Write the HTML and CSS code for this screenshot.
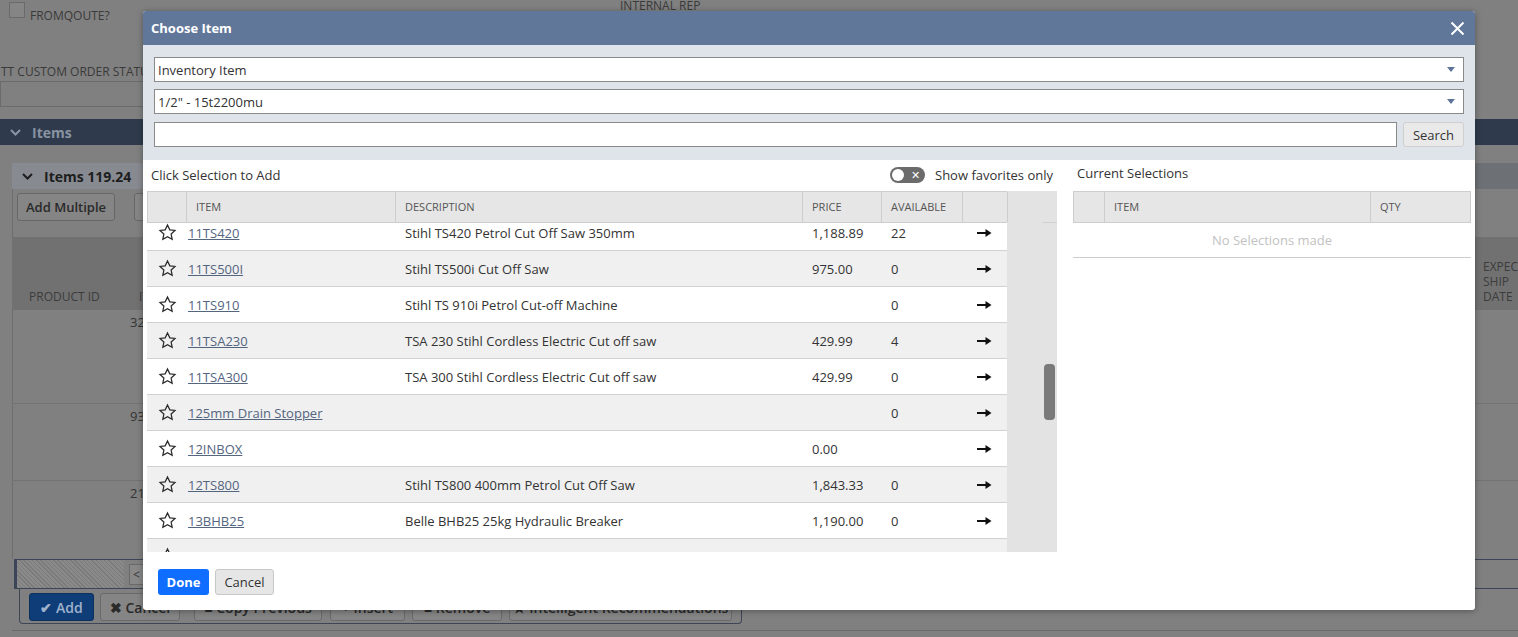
FILE: index.html
```html
<!DOCTYPE html>
<html>
<head>
<meta charset="utf-8">
<title>Choose Item</title>
<link rel="stylesheet" href="styles.css">
</head>
<body>
<div class="page">
  <div class="top-row">
    <div class="chk-wrap"><span class="chk"></span><span class="chk-label">FROMQOUTE?</span></div>
    <span class="rep-label">INTERNAL REP</span>
  </div>
  <div class="status-label">TT CUSTOM ORDER STATUS</div>
  <div class="status-input"></div>
  <div class="items-bar">
    <svg class="chev" width="11" height="7" viewBox="0 0 11 7"><path d="M1 1l4.5 4.5L10 1" fill="none" stroke="#8a94a3" stroke-width="2"/></svg>
    <span>Items</span>
  </div>
  <div class="subpanel">
    <div class="subtabs">
      <div class="subtab">
        <svg class="chev" width="11" height="7" viewBox="0 0 11 7"><path d="M1 1l4.5 4.5L10 1" fill="none" stroke="#1e1e1e" stroke-width="2"/></svg>
        <span>Items 119.24</span>
      </div>
    </div>
    <div class="sub-toolbar">
      <button class="bg-btn">Add Multiple</button>
      <button class="bg-btn">Clear</button>
    </div>
    <div class="lines-head">
      <span>PRODUCT ID</span>
      <span>ITEM</span>
      <span>EXPECTED<br>SHIP<br>DATE</span>
    </div>
    <div class="line r1"><span></span><span class="num">32</span><span></span></div>
    <div class="line r2"><span></span><span class="num">93</span><span></span></div>
    <div class="line r3"><span></span><span class="num">21</span><span></span></div>
    <div class="pager-bar">
      <div class="hatch"></div>
      <div class="pager-btn">&lt;</div>
    </div>
    <div class="btn-panel">
      <button class="pb pb-add w-add">&#10004; Add</button>
      <button class="pb w-cancel">&#10006; Cancel</button>
      <button class="pb w-copy">&#9632; Copy Previous</button>
      <button class="pb w-insert">+ Insert</button>
      <button class="pb w-remove">&#9632; Remove</button>
      <button class="pb w-intel">&#9733; Intelligent Recommendations</button>
    </div>
  </div>
  <div class="bottom-line"></div>
</div>

<div class="modal">
  <div class="m-head">
    <span>Choose Item</span>
    <svg width="15" height="15" viewBox="0 0 15 15"><path d="M1.5 1.5l12 12M13.5 1.5l-12 12" stroke="#fff" stroke-width="2"/></svg>
  </div>
  <div class="m-filters">
    <div class="select"><span>Inventory Item</span><span class="caret"></span></div>
    <div class="select"><span>1/2" - 15t2200mu</span><span class="caret"></span></div>
    <div class="search-row">
      <div class="search-input"></div>
      <button class="search-btn">Search</button>
    </div>
  </div>
  <div class="m-content">
    <div class="left">
      <div class="left-title">
        <span>Click Selection to Add</span>
        <div class="fav">
          <span class="toggle"><span class="knob"></span><span class="tx">&#10005;</span></span>
          <span>Show favorites only</span>
        </div>
      </div>
      <div class="grid-wrap">
        <div class="tbl">
          <div class="thead">
            <div class="th"></div>
            <div class="th">Item</div>
            <div class="th">Description</div>
            <div class="th">Price</div>
            <div class="th">Available</div>
            <div class="th"></div>
          </div>
          <div class="tbody">
            <div class="rows">
              <div class="row">
                <div class="c-star"><svg class="star" width="19" height="19" viewBox="0 0 24 24"><path d="M12 2.5l2.9 6.1 6.6.8-4.9 4.6 1.3 6.6L12 17.3l-5.9 3.3 1.3-6.6-4.9-4.6 6.6-.8z"/></svg></div>
                <div class="c-item"><a>11TS420</a></div>
                <div class="c-txt">Stihl TS420 Petrol Cut Off Saw 350mm</div>
                <div class="c-txt">1,188.89</div>
                <div class="c-txt">22</div>
                <div class="c-arr"><svg width="15" height="10" viewBox="0 0 15 10"><path d="M0 5h10" stroke="#111" stroke-width="2"/><path d="M8.5 1l6 4-6 4z" fill="#111"/></svg></div>
              </div>
              <div class="row">
                <div class="c-star"><svg class="star" width="19" height="19" viewBox="0 0 24 24"><path d="M12 2.5l2.9 6.1 6.6.8-4.9 4.6 1.3 6.6L12 17.3l-5.9 3.3 1.3-6.6-4.9-4.6 6.6-.8z"/></svg></div>
                <div class="c-item"><a>11TS500I</a></div>
                <div class="c-txt">Stihl TS500i Cut Off Saw</div>
                <div class="c-txt">975.00</div>
                <div class="c-txt">0</div>
                <div class="c-arr"><svg width="15" height="10" viewBox="0 0 15 10"><path d="M0 5h10" stroke="#111" stroke-width="2"/><path d="M8.5 1l6 4-6 4z" fill="#111"/></svg></div>
              </div>
              <div class="row">
                <div class="c-star"><svg class="star" width="19" height="19" viewBox="0 0 24 24"><path d="M12 2.5l2.9 6.1 6.6.8-4.9 4.6 1.3 6.6L12 17.3l-5.9 3.3 1.3-6.6-4.9-4.6 6.6-.8z"/></svg></div>
                <div class="c-item"><a>11TS910</a></div>
                <div class="c-txt">Stihl TS 910i Petrol Cut-off Machine</div>
                <div class="c-txt"></div>
                <div class="c-txt">0</div>
                <div class="c-arr"><svg width="15" height="10" viewBox="0 0 15 10"><path d="M0 5h10" stroke="#111" stroke-width="2"/><path d="M8.5 1l6 4-6 4z" fill="#111"/></svg></div>
              </div>
              <div class="row">
                <div class="c-star"><svg class="star" width="19" height="19" viewBox="0 0 24 24"><path d="M12 2.5l2.9 6.1 6.6.8-4.9 4.6 1.3 6.6L12 17.3l-5.9 3.3 1.3-6.6-4.9-4.6 6.6-.8z"/></svg></div>
                <div class="c-item"><a>11TSA230</a></div>
                <div class="c-txt">TSA 230 Stihl Cordless Electric Cut off saw</div>
                <div class="c-txt">429.99</div>
                <div class="c-txt">4</div>
                <div class="c-arr"><svg width="15" height="10" viewBox="0 0 15 10"><path d="M0 5h10" stroke="#111" stroke-width="2"/><path d="M8.5 1l6 4-6 4z" fill="#111"/></svg></div>
              </div>
              <div class="row">
                <div class="c-star"><svg class="star" width="19" height="19" viewBox="0 0 24 24"><path d="M12 2.5l2.9 6.1 6.6.8-4.9 4.6 1.3 6.6L12 17.3l-5.9 3.3 1.3-6.6-4.9-4.6 6.6-.8z"/></svg></div>
                <div class="c-item"><a>11TSA300</a></div>
                <div class="c-txt">TSA 300 Stihl Cordless Electric Cut off saw</div>
                <div class="c-txt">429.99</div>
                <div class="c-txt">0</div>
                <div class="c-arr"><svg width="15" height="10" viewBox="0 0 15 10"><path d="M0 5h10" stroke="#111" stroke-width="2"/><path d="M8.5 1l6 4-6 4z" fill="#111"/></svg></div>
              </div>
              <div class="row">
                <div class="c-star"><svg class="star" width="19" height="19" viewBox="0 0 24 24"><path d="M12 2.5l2.9 6.1 6.6.8-4.9 4.6 1.3 6.6L12 17.3l-5.9 3.3 1.3-6.6-4.9-4.6 6.6-.8z"/></svg></div>
                <div class="c-item"><a>125mm Drain Stopper</a></div>
                <div class="c-txt"></div>
                <div class="c-txt"></div>
                <div class="c-txt">0</div>
                <div class="c-arr"><svg width="15" height="10" viewBox="0 0 15 10"><path d="M0 5h10" stroke="#111" stroke-width="2"/><path d="M8.5 1l6 4-6 4z" fill="#111"/></svg></div>
              </div>
              <div class="row">
                <div class="c-star"><svg class="star" width="19" height="19" viewBox="0 0 24 24"><path d="M12 2.5l2.9 6.1 6.6.8-4.9 4.6 1.3 6.6L12 17.3l-5.9 3.3 1.3-6.6-4.9-4.6 6.6-.8z"/></svg></div>
                <div class="c-item"><a>12INBOX</a></div>
                <div class="c-txt"></div>
                <div class="c-txt">0.00</div>
                <div class="c-txt"></div>
                <div class="c-arr"><svg width="15" height="10" viewBox="0 0 15 10"><path d="M0 5h10" stroke="#111" stroke-width="2"/><path d="M8.5 1l6 4-6 4z" fill="#111"/></svg></div>
              </div>
              <div class="row">
                <div class="c-star"><svg class="star" width="19" height="19" viewBox="0 0 24 24"><path d="M12 2.5l2.9 6.1 6.6.8-4.9 4.6 1.3 6.6L12 17.3l-5.9 3.3 1.3-6.6-4.9-4.6 6.6-.8z"/></svg></div>
                <div class="c-item"><a>12TS800</a></div>
                <div class="c-txt">Stihl TS800 400mm Petrol Cut Off Saw</div>
                <div class="c-txt">1,843.33</div>
                <div class="c-txt">0</div>
                <div class="c-arr"><svg width="15" height="10" viewBox="0 0 15 10"><path d="M0 5h10" stroke="#111" stroke-width="2"/><path d="M8.5 1l6 4-6 4z" fill="#111"/></svg></div>
              </div>
              <div class="row">
                <div class="c-star"><svg class="star" width="19" height="19" viewBox="0 0 24 24"><path d="M12 2.5l2.9 6.1 6.6.8-4.9 4.6 1.3 6.6L12 17.3l-5.9 3.3 1.3-6.6-4.9-4.6 6.6-.8z"/></svg></div>
                <div class="c-item"><a>13BHB25</a></div>
                <div class="c-txt">Belle BHB25 25kg Hydraulic Breaker</div>
                <div class="c-txt">1,190.00</div>
                <div class="c-txt">0</div>
                <div class="c-arr"><svg width="15" height="10" viewBox="0 0 15 10"><path d="M0 5h10" stroke="#111" stroke-width="2"/><path d="M8.5 1l6 4-6 4z" fill="#111"/></svg></div>
              </div>
              <div class="row">
                <div class="c-star"><svg class="star" width="19" height="19" viewBox="0 0 24 24"><path d="M12 2.5l2.9 6.1 6.6.8-4.9 4.6 1.3 6.6L12 17.3l-5.9 3.3 1.3-6.6-4.9-4.6 6.6-.8z"/></svg></div>
                <div class="c-item"><a>13BHB35</a></div>
                <div class="c-txt">Belle BHB35 35kg Hydraulic Breaker with Chisel and Point</div>
                <div class="c-txt">1,450.00</div>
                <div class="c-txt">0</div>
                <div class="c-arr"><svg width="15" height="10" viewBox="0 0 15 10"><path d="M0 5h10" stroke="#111" stroke-width="2"/><path d="M8.5 1l6 4-6 4z" fill="#111"/></svg></div>
              </div>
            </div>
          </div>
        </div>
        <div class="scroll-gap"></div>
        <div class="scrollbar">
          <div class="sb-top"></div>
          <div class="sb-thumb"></div>
        </div>
      </div>
    </div>
    <div class="right">
      <div class="right-title">Current Selections</div>
      <div class="sel-head">
        <div class="th"></div>
        <div class="th">Item</div>
        <div class="th">Qty</div>
      </div>
      <div class="empty">No Selections made</div>
    </div>
  </div>
  <div class="m-foot">
    <button class="btn-done">Done</button>
    <button class="btn-cancel">Cancel</button>
  </div>
</div>
</body>
</html>
```

FILE: styles.css
```css
* { box-sizing: border-box; }
html, body { margin: 0; padding: 0; }
body {
  width: 1518px;
  height: 637px;
  overflow: hidden;
  background: #808080;
  font-family: "Open Sans", "Liberation Sans", sans-serif;
  font-size: 13px;
  color: #333;
  position: relative;
}

/* ---------- dimmed background page ---------- */
.page { color: #353535; }
.top-row {
  height: 22px;
  display: grid;
  grid-template-columns: 611px auto;
  padding-left: 9px;
}
.chk-wrap { display: flex; align-items: flex-start; padding-top: 2px; }
.chk { width: 16px; height: 16px; border: 1px solid #6a6a6a; background: #858585; display: block; }
.chk-label { margin-left: 5px; margin-top: 6px; font-size: 12px; line-height: 16px; color: #3a3a3a; }
.rep-label { font-size: 12px; line-height: 14px; margin-top: -1px; color: #3a3a3a; }
.status-label { margin-top: 42px; font-size: 12px; line-height: 16px; color: #3a3a3a; padding-left: 1px; }
.status-input { margin-top: 1px; width: 145px; height: 26px; border: 1px solid #6b6b6b; background: #808080; }
.items-bar {
  margin-top: 12px;
  height: 26px;
  background: #2f3b4c;
  display: flex;
  align-items: center;
  padding-left: 10px;
  gap: 11px;
  color: #8893a3;
  font-weight: 700;
  font-size: 14px;
}
.subpanel { margin-top: 18px; margin-left: 12px; }
.subtabs { height: 26px; background: #6d7175; display: flex; }
.subtab {
  width: 140px;
  background: #878b91;
  display: flex;
  align-items: center;
  gap: 11px;
  padding-left: 10px;
  font-weight: 700;
  font-size: 14px;
  color: #1e1e1e;
}
.sub-toolbar { height: 48px; padding: 4px 0 0 4px; display: flex; gap: 19px; align-items: flex-start; border-left: 1px solid #6e6e6e; }
.bg-btn {
  height: 28px;
  padding: 0 8px;
  background: #858585;
  border: 1px solid #676767;
  border-radius: 3px;
  font-family: inherit;
  font-weight: 600;
  font-size: 13px;
  color: #2a2a2a;
  white-space: nowrap;
}
.lines-head, .line {
  display: grid;
  grid-template-columns: 110px 1344px auto;
  padding-left: 17px;
}
.lines-head {
  height: 73px;
  background: #717171;
  align-items: end;
  padding-bottom: 6px;
  font-size: 12px;
  line-height: 15px;
  color: #3c3c3c;
}
.line { border-bottom: 1px solid #737373; border-left: 1px solid #6e6e6e; }
.r1 { height: 94px; }
.r2 { height: 77px; }
.r3 { height: 78px; border-bottom: none; }
.num { padding-top: 4px; font-size: 13px; line-height: 16px; color: #333; margin-left: -10px; }
.pager-bar {
  margin-left: 2px;
  height: 30px;
  border-top: 1px solid #3c4557;
  border-bottom: 1px solid #3c4557;
  display: flex;
  align-items: center;
}
.hatch {
  width: 110px;
  height: 100%;
  border-left: 3px solid #3c4557;
  background: repeating-linear-gradient(45deg, #7a7a7a 0 1px, #8a8a8a 1px 3px);
}
.pager-btn {
  margin-left: 5px;
  width: 20px;
  height: 21px;
  border: 1px solid #6a6a6a;
  background: #888;
  font-size: 12px;
  line-height: 19px;
  padding-left: 3px;
}
.btn-panel {
  margin-left: 7px;
  width: 723px;
  height: 35px;
  border: 1px solid #3d4556;
  border-top: none;
  border-radius: 0 0 4px 4px;
  padding: 4px 0 0 9px;
  display: flex;
  gap: 7px;
  align-items: flex-start;
}
.pb {
  flex: none;
  height: 28px;
  padding: 0;
  background: #858585;
  border: 1px solid #6a6a6a;
  border-radius: 3px;
  font-family: inherit;
  font-size: 14px;
  font-weight: 600;
  color: #2a2a2a;
  white-space: nowrap;
  overflow: hidden;
}
.w-add { width: 65px; margin-right: -1px; }
.w-cancel { width: 80px; margin-right: 7px; }
.w-copy { width: 128px; margin-right: 1px; }
.w-insert { width: 75px; }
.w-remove { width: 90px; }
.w-intel { width: 223px; }
.pb-add { background: #0f3d78; border-color: #0b2f5e; color: #9fb3cc; }
.bottom-line { margin-top: 6px; margin-left: 12px; height: 1px; background: #6a6a6a; }

/* ---------- modal ---------- */
.modal {
  position: absolute;
  left: 143px;
  top: 11px;
  width: 1332px;
  height: 599px;
  background: #fff;
  border-radius: 3px;
  box-shadow: 0 1px 6px rgba(0,0,0,.35);
  display: flex;
  flex-direction: column;
  overflow: hidden;
  font-size: 13px;
  color: #333;
}
.m-head {
  height: 34px;
  flex: none;
  background: #607799;
  display: flex;
  align-items: center;
  justify-content: space-between;
  padding: 0 10px 0 8px;
  color: #fff;
  font-weight: 700;
  font-size: 13px;
}
.m-filters {
  flex: none;
  background: #dfe3ea;
  padding: 12px 11px 13px;
  display: flex;
  flex-direction: column;
  gap: 7px;
}
.select {
  height: 25px;
  border: 1px solid #8a8a8a;
  background: #fff;
  display: flex;
  align-items: center;
  justify-content: space-between;
  padding: 0 8px 0 3px;
  color: #333;
}
.caret {
  width: 0;
  height: 0;
  border-left: 4px solid transparent;
  border-right: 4px solid transparent;
  border-top: 5px solid #5f7597;
}
.search-row { display: flex; gap: 6px; margin-top: 1px; }
.search-input { flex: 1; height: 25px; border: 1px solid #8a8a8a; background: #fff; }
.search-btn {
  width: 61px;
  height: 25px;
  background: #e9e9e9;
  border: 1px solid #cfcfcf;
  border-radius: 3px;
  font-family: inherit;
  font-size: 13px;
  color: #333;
  padding: 0;
}
.m-content { flex: 1; display: flex; padding: 0 4px; gap: 16px; min-height: 0; }
.left { width: 910px; display: flex; flex-direction: column; }
.left-title {
  height: 31px;
  display: flex;
  align-items: center;
  justify-content: space-between;
  padding: 0 4px 2px;
  color: #333;
}
.fav { display: flex; align-items: center; gap: 10px; }
.toggle {
  width: 35px;
  height: 16px;
  border-radius: 8px;
  background: #6b6b6b;
  display: flex;
  align-items: center;
  justify-content: space-between;
  padding: 0 5px 0 2px;
}
.knob { width: 12px; height: 12px; border-radius: 50%; background: #fff; }
.tx { color: #fff; font-size: 11px; line-height: 12px; }
.grid-wrap { height: 361px; background: #e3e3e3; display: flex; }
.tbl { width: 860px; display: flex; flex-direction: column; }
.thead, .row {
  display: grid;
  grid-template-columns: 39px 209px 407px 79px 81px 45px;
}
.thead {
  height: 32px;
  flex: none;
  background: #e6e6e6;
  border-top: 1px solid #cdcdcd;
  border-bottom: 1px solid #cdcdcd;
  border-left: 1px solid #cdcdcd;
}
.th {
  border-right: 1px solid #cdcdcd;
  display: flex;
  align-items: center;
  padding-left: 9px;
  padding-bottom: 1px;
  font-size: 11px;
  text-transform: uppercase;
  color: #555;
}
.tbody { flex: 1; overflow: hidden; background: #fff; }
.rows { margin-top: -8px; }
.row {
  height: 36px;
  border-bottom: 1px solid #d2d2d2;
  align-items: center;
  background: #fff;
}
.row:nth-child(even) { background: #f0f0f0; }
.c-star { display: flex; justify-content: center; padding-left: 2px; }
.star path { fill: none; stroke: #2b2b2b; stroke-width: 1.6; stroke-linejoin: miter; }
.c-item { padding-left: 2px; }
.c-item a { color: #53657f; text-decoration: underline; }
.c-txt { padding-left: 10px; white-space: nowrap; overflow: hidden; color: #333; }
.c-arr { padding-left: 15px; display: flex; align-items: center; }
.scroll-gap { width: 35px; }
.scrollbar { width: 15px; display: flex; flex-direction: column; }
.sb-top { height: 32px; border-bottom: 1px solid #d0d0d0; }
.sb-thumb { margin: 141px 2px 0 2px; height: 56px; border-radius: 4px; background: #7a7a7a; }
.right { width: 398px; display: flex; flex-direction: column; }
.right-title { height: 31px; display: flex; align-items: center; padding: 0 0 6px 4px; color: #333; }
.sel-head {
  display: grid;
  grid-template-columns: 31px 266px 101px;
  height: 32px;
  background: #e6e6e6;
  border: 1px solid #cdcdcd;
}
.sel-head .th:last-child { border-right: none; }
.empty {
  height: 35px;
  border-bottom: 1px solid #cdcdcd;
  text-align: center;
  line-height: 34px;
  color: #c2c2c2;
}
.m-foot { flex: none; height: 58px; padding: 17px 15px 15px; display: flex; gap: 6px; }
.btn-done {
  width: 51px;
  height: 26px;
  background: #0f6dff;
  border: none;
  border-radius: 3px;
  font-family: inherit;
  font-weight: 700;
  font-size: 13px;
  color: #fff;
  padding: 0;
}
.btn-cancel {
  width: 59px;
  height: 26px;
  background: #e6e6e6;
  border: 1px solid #c8c8c8;
  border-radius: 3px;
  font-family: inherit;
  font-size: 13px;
  color: #333;
  padding: 0;
}
```
